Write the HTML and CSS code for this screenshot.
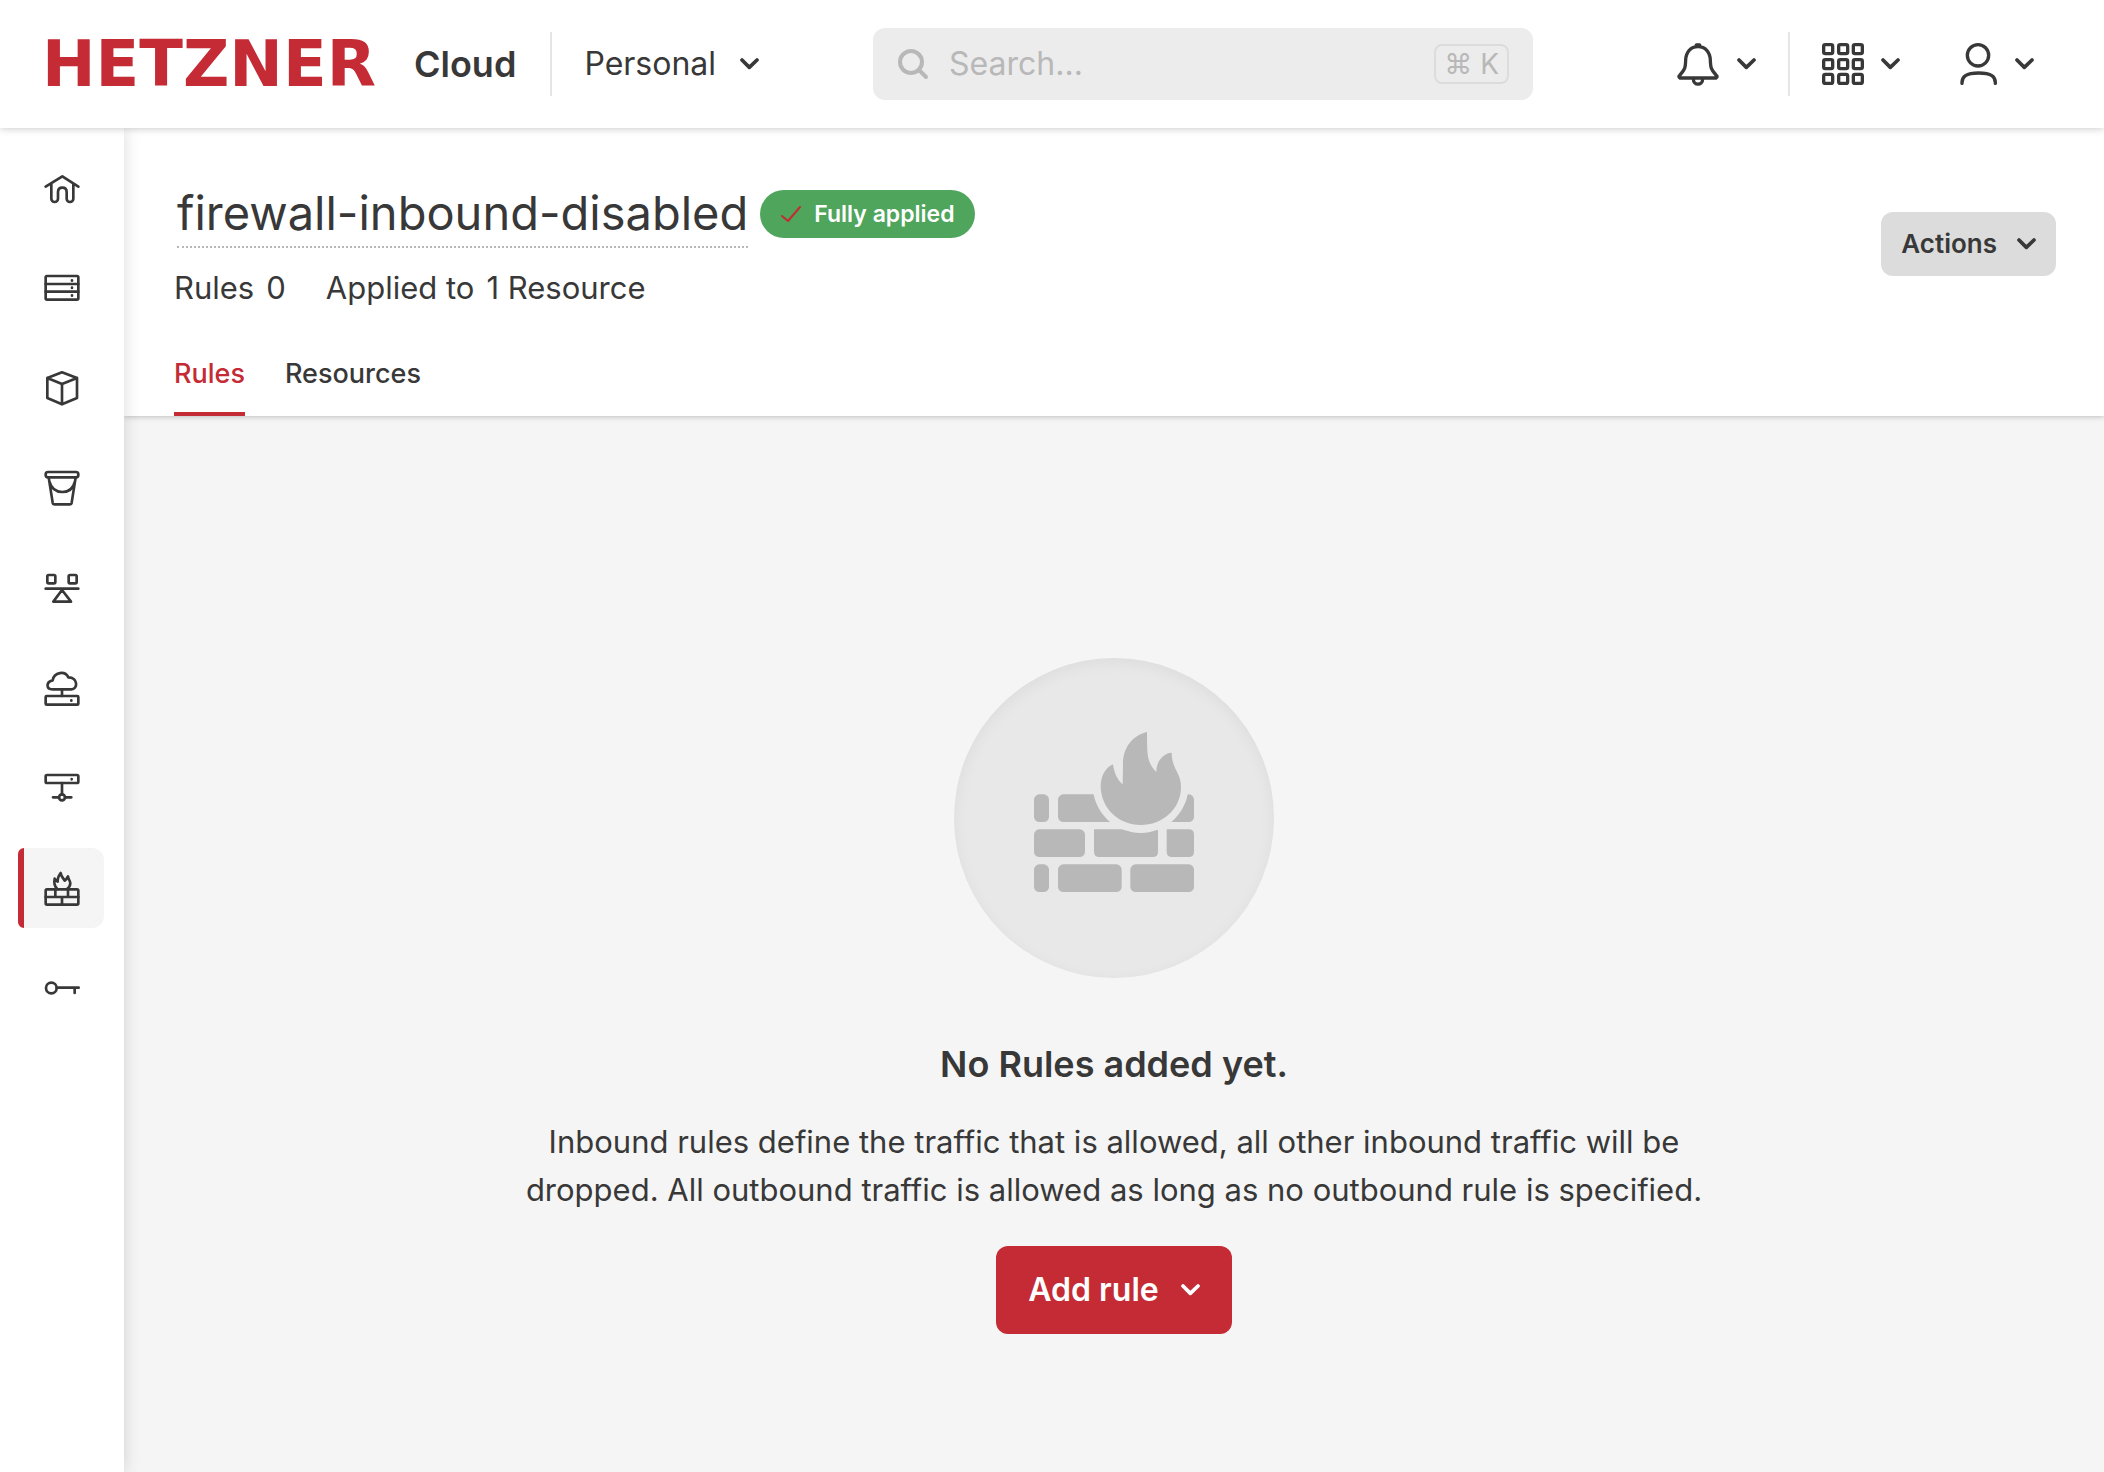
FILE: index.html
```html
<!DOCTYPE html>
<html lang="en">
<head>
    <meta charset="UTF-8">
    <meta name="viewport" content="width=device-width, initial-scale=1.0">
    <title>firewall-inbound-disabled</title>
    <link rel="stylesheet" href="styles.css">
</head>
<body>

<!-- Shared shapes -->
<svg class="sprite" aria-hidden="true">
    <symbol id="chevron" viewBox="0 0 57 36">
        <path d="M6 6 28 28 51 6"/>
    </symbol>
</svg>

<!-- Top bar -->
<header class="topbar">
    <a class="brand" href="#">
        <span class="logo">HETZNER</span>
        <span class="product">Cloud</span>
    </a>
    <span class="divider"></span>
    <button class="menu project" type="button">
        Personal
        <svg class="chevron"><use href="#chevron"/></svg>
    </button>

    <form class="search">
        <svg class="search-icon" viewBox="0 0 32 32"><circle cx="14" cy="14" r="11"/><path d="M22 22 29 29"/></svg>
        <input type="text" placeholder="Search..." aria-label="Search">
        <kbd>⌘ K</kbd>
    </form>

    <div class="tools">
        <button class="menu" type="button" aria-label="Notifications">
            <svg class="bell" viewBox="0 0 132 132">
                <path d="M12 108c-5-3-4-6 0-9 18-19 16-27 17-45C30 30 44 14 66 14s36 16 37 40c1 18-1 26 17 45 4 3 5 6 0 9z"/>
                <path d="M52 110c0 22 28 22 28 0M61 9h10"/>
            </svg>
            <svg class="chevron"><use href="#chevron"/></svg>
        </button>
        <span class="divider"></span>
        <button class="menu" type="button" aria-label="Applications">
            <svg class="apps" viewBox="0 0 126 126">
                <rect x="5" y="5" width="27" height="27" rx="5"/>
                <rect x="50" y="5" width="27" height="27" rx="5"/>
                <rect x="94" y="5" width="27" height="27" rx="5"/>
                <rect x="5" y="50" width="27" height="27" rx="5"/>
                <rect x="50" y="50" width="27" height="27" rx="5"/>
                <rect x="94" y="50" width="27" height="27" rx="5"/>
                <rect x="5" y="94" width="27" height="27" rx="5"/>
                <rect x="50" y="94" width="27" height="27" rx="5"/>
                <rect x="94" y="94" width="27" height="27" rx="5"/>
            </svg>
            <svg class="chevron"><use href="#chevron"/></svg>
        </button>
        <button class="menu account" type="button" aria-label="Account">
            <svg class="user" viewBox="0 0 114 126">
                <circle cx="54" cy="37" r="32"/>
                <path d="M6 121C5 101 18 90 56 90s51 11 50 31"/>
            </svg>
            <svg class="chevron"><use href="#chevron"/></svg>
        </button>
    </div>
</header>

<div class="layout">

    <!-- Side navigation -->
    <nav class="sidebar">
        <a href="#" aria-label="Home">
            <svg viewBox="0 0 108 108"><path d="M5 50 55 19 103 50M22 42v44a10 10 0 0 0 20 0V66q0-13 13-13t13 13v20a10 10 0 0 0 20 0V42"/></svg>
        </a>
        <a href="#" aria-label="Servers">
            <svg viewBox="0 0 108 108"><rect x="5" y="18" width="98" height="71" rx="4"/><path d="M5 42h98M5 65h98M84 31v1M84 53v1M84 76v1"/></svg>
        </a>
        <a href="#" aria-label="Volumes">
            <svg viewBox="0 0 108 108"><path d="M54 7 10 24v60l44 19 45-19V24zM10 24l44 18 45-18M54 42v61"/></svg>
        </a>
        <a href="#" aria-label="Object Storage">
            <svg viewBox="0 0 108 108"><rect x="5" y="6" width="98" height="16" rx="7"/><path d="M14 22 26 98q1 5 6 5h45q5 0 6-5L95 22M16 34q9 32 39 32t38-32"/></svg>
        </a>
        <a href="#" aria-label="Load Balancers">
            <svg viewBox="0 0 108 108"><rect x="10" y="15" width="24" height="25" rx="4"/><rect x="74" y="15" width="24" height="25" rx="4"/><path d="M5 56h98M54 60 28 95h53z"/></svg>
        </a>
        <a href="#" aria-label="Floating IPs">
            <svg viewBox="0 0 108 108"><rect x="5" y="78" width="98" height="26" rx="3"/><path d="M54 59v19M82 91v1M26 58C6 58 5 36 26 31 30 5 64 2 73 22 103 22 102 58 82 58z"/></svg>
        </a>
        <a href="#" aria-label="Networks">
            <svg viewBox="0 0 108 108"><rect x="5" y="15" width="98" height="24" rx="4"/><circle cx="54" cy="82" r="9"/><path d="M83 27v1M54 39v34M27 82h18M63 82h19"/></svg>
        </a>
        <a class="active" href="#" aria-label="Firewalls">
            <svg viewBox="0 0 108 108"><rect x="5" y="58" width="98" height="46" rx="4"/><path d="M5 81h98M34 59v22M72 59v22M54 81v23M40 57C29 47 30 36 32 26q4 6 9 9C40 24 45 16 50 9c1 10 7 14 12 23q6-5 10-13c0 9 7 12 7 21q-1 11-10 17"/></svg>
        </a>
        <a href="#" aria-label="Security">
            <svg viewBox="0 0 108 108"><circle cx="22" cy="54" r="16"/><path d="M38 53h66M92 53v16"/></svg>
        </a>
    </nav>

    <main class="main">
        <div class="page-head">
            <div class="head-row">
                <div>
                    <div class="title-row">
                        <h1>firewall-inbound-disabled</h1>
                        <span class="badge">
                            <svg class="check" viewBox="0 0 22 20"><path d="M2 12 8 17 20 3"/></svg>
                            Fully applied
                        </span>
                    </div>
                    <div class="meta">
                        <p><span>Rules</span><span>0</span></p>
                        <p><span>Applied to</span><span>1 Resource</span></p>
                    </div>
                </div>
                <button class="actions" type="button">
                    Actions
                    <svg class="chevron"><use href="#chevron"/></svg>
                </button>
            </div>
            <nav class="tabs">
                <a class="active" href="#">Rules</a>
                <a href="#">Resources</a>
            </nav>
        </div>

        <!-- Empty state -->
        <section class="empty">
            <div class="circle">
                <svg class="wall" viewBox="0 0 480 480">
                    <rect x="0" y="187" width="45" height="83" rx="16"/>
                    <rect x="72" y="187" width="191" height="83" rx="16"/>
                    <rect x="289" y="187" width="191" height="83" rx="16"/>
                    <rect x="0" y="292" width="153" height="83" rx="16"/>
                    <path d="M180 292H372V359Q372 375 356 375H196Q180 375 180 359z"/>
                    <path d="M398 292H464Q480 292 480 308V359Q480 375 464 375H414Q398 375 398 359z"/>
                    <rect x="0" y="397" width="45" height="83" rx="16"/>
                    <rect x="72" y="397" width="191" height="83" rx="16"/>
                    <rect x="289" y="397" width="191" height="83" rx="16"/>
                    <circle class="gap" cx="320" cy="159" r="144"/>
                    <path d="M339 0C295 10 267 48 267 95L266 157C250 145 240 120 237 97 212 108 200 135 200 165 202 230 255 279 320 279S441 232 441 165C441 120 414 115 413 62 385 64 367 90 367 120 336 90 340 60 339 0z"/>
                </svg>
            </div>
            <h2>No Rules added yet.</h2>
            <p>Inbound rules define the traffic that is allowed, all other inbound traffic will be dropped. All outbound traffic is allowed as long as no outbound rule is specified.</p>
            <button class="add" type="button">
                Add rule
                <svg class="chevron"><use href="#chevron"/></svg>
            </button>
        </section>
    </main>
</div>

</body>
</html>
```
FILE: styles.css
```css
* {
    box-sizing: border-box;
}

body {
    display: flex;
    flex-direction: column;
    min-height: 100vh;
    margin: 0;
    background-color: #f5f5f5;
    color: #383838;
    font-family: Inter, "Liberation Sans", sans-serif;
    font-size: 32px;
    line-height: 48px;
}

h1, h2, p {
    margin: 0;
}

a {
    color: inherit;
    text-decoration: none;
}

button {
    border: none;
    background: none;
    color: inherit;
    font: inherit;
    cursor: pointer;
}

svg {
    display: block;
    flex: none;
    fill: none;
    stroke: currentColor;
    stroke-linecap: round;
    stroke-linejoin: round;
}

.sprite {
    display: none;
}

.chevron {
    width: 19px;
    height: 12px;
    stroke-width: 11;
}

/* Top bar */
.topbar {
    display: flex;
    align-items: center;
    height: 128px;
    padding: 0 70px 0 42px;
    background-color: #fff;
    box-shadow: 0 0 8px rgba(0, 0, 0, 0.25);
    z-index: 2;
}

.brand {
    display: flex;
    align-items: center;
    gap: 24px;
}

.logo {
    min-width: 348px;
    color: #c42b34;
    font-family: "DejaVu Sans", sans-serif;
    font-size: 64px;
    font-weight: bold;
}

.product {
    font-size: 36px;
    font-weight: 600;
}

.divider {
    width: 2px;
    height: 64px;
    background-color: #e5e5e5;
}

.brand + .divider {
    margin: 0 32px 0 34px;
}

.menu {
    display: flex;
    align-items: center;
    gap: 17px;
    padding: 0;
}

.project {
    gap: 24px;
}

.search {
    display: flex;
    align-items: center;
    flex: 0 1 660px;
    min-width: 0;
    height: 72px;
    margin: 0 auto 0 114px;
    padding: 0 24px;
    border-radius: 12px;
    background-color: #ececec;
    color: #b8b8b8;
}

.search-icon {
    width: 32px;
    height: 32px;
    stroke-width: 4;
}

.search input {
    flex: 1;
    min-width: 0;
    margin: 0 20px;
    padding: 0;
    border: none;
    outline: none;
    background: none;
    color: #383838;
    font: inherit;
}

.search input::placeholder {
    color: #b8b8b8;
    opacity: 1;
}

kbd {
    padding: 0 8px;
    border: 2px solid #dcdcdc;
    border-radius: 8px;
    font-family: inherit;
    font-size: 28px;
    line-height: 36px;
}

.tools {
    display: flex;
    align-items: center;
    gap: 32px;
}

.bell {
    width: 44px;
    height: 44px;
    stroke-width: 10;
}

.apps {
    width: 42px;
    height: 42px;
    stroke-width: 10;
}

.user {
    width: 38px;
    height: 42px;
    stroke-width: 10;
}

.account {
    margin-left: 28px;
}

/* Side navigation */
.layout {
    display: flex;
    flex: 1;
}

.sidebar {
    display: flex;
    flex-direction: column;
    flex: none;
    gap: 20px;
    width: 124px;
    padding: 20px 20px 20px 18px;
    background-color: #fff;
    box-shadow: 0 0 16px rgba(0, 0, 0, 0.15);
    z-index: 1;
}

.sidebar a {
    display: flex;
    align-items: center;
    height: 80px;
    padding-left: 20px;
    border-left: 6px solid transparent;
    border-radius: 6px 12px 12px 6px;
}

.sidebar .active {
    border-color: #c42b34;
    background-color: #f5f5f5;
}

.sidebar svg {
    width: 36px;
    height: 36px;
    stroke-width: 8;
}

/* Page head */
.main {
    flex: 1;
    display: flex;
    flex-direction: column;
    min-width: 0;
}

.page-head {
    padding: 52px 48px 0 50px;
    background-color: #fff;
    box-shadow: 0 0 6px rgba(0, 0, 0, 0.3);
}

.head-row {
    display: flex;
    justify-content: space-between;
    align-items: center;
}

.title-row {
    display: flex;
    align-items: center;
    gap: 12px;
}

h1 {
    margin-left: 3px;
    border-bottom: 2px dotted #b8b8b8;
    font-size: 47px;
    font-weight: 400;
    line-height: 66px;
}

.badge {
    display: flex;
    align-items: center;
    gap: 12px;
    height: 48px;
    padding: 0 20px;
    border-radius: 24px;
    background-color: #4ea55b;
    color: #fff;
    font-size: 23px;
    font-weight: 600;
}

.check {
    width: 22px;
    height: 20px;
    stroke: #c42b34;
    stroke-width: 2;
}

.meta {
    display: flex;
    gap: 40px;
    margin-top: 16px;
    font-size: 31px;
}

.meta p {
    display: flex;
    gap: 12px;
}

.actions {
    display: flex;
    align-items: center;
    gap: 20px;
    height: 64px;
    margin-bottom: 4px;
    padding: 0 20px;
    border-radius: 12px;
    background-color: #dcdcdc;
    font-size: 26px;
    font-weight: 600;
}

.tabs {
    display: flex;
    gap: 40px;
    margin-top: 24px;
    font-size: 27px;
    font-weight: 500;
}

.tabs a {
    padding: 14px 0;
    border-bottom: 4px solid transparent;
}

.tabs .active {
    border-color: #c42b34;
    color: #c42b34;
}

/* Empty state */
.empty {
    display: flex;
    flex: 1;
    flex-direction: column;
    align-items: center;
    justify-content: center;
    padding: 104px 40px 0;
    text-align: center;
}

.circle {
    display: flex;
    align-items: center;
    justify-content: center;
    width: 320px;
    height: 320px;
    padding-bottom: 12px;
    border-radius: 50%;
    background-color: #e8e8e8;
    box-shadow: inset 0 4px 16px rgba(0, 0, 0, 0.05);
}

.wall {
    width: 160px;
    height: 160px;
    fill: #b8b8b8;
    stroke: none;
}

.gap {
    fill: #e8e8e8;
}

h2 {
    margin-top: 62px;
    font-size: 36px;
    font-weight: 600;
}

.empty p {
    max-width: 1200px;
    margin-top: 30px;
    font-size: 31px;
}

.add {
    display: flex;
    align-items: center;
    gap: 22px;
    height: 88px;
    margin-top: 32px;
    padding: 0 32px;
    border-radius: 12px;
    background-color: #c42b34;
    color: #fff;
    font-weight: 600;
}
```
